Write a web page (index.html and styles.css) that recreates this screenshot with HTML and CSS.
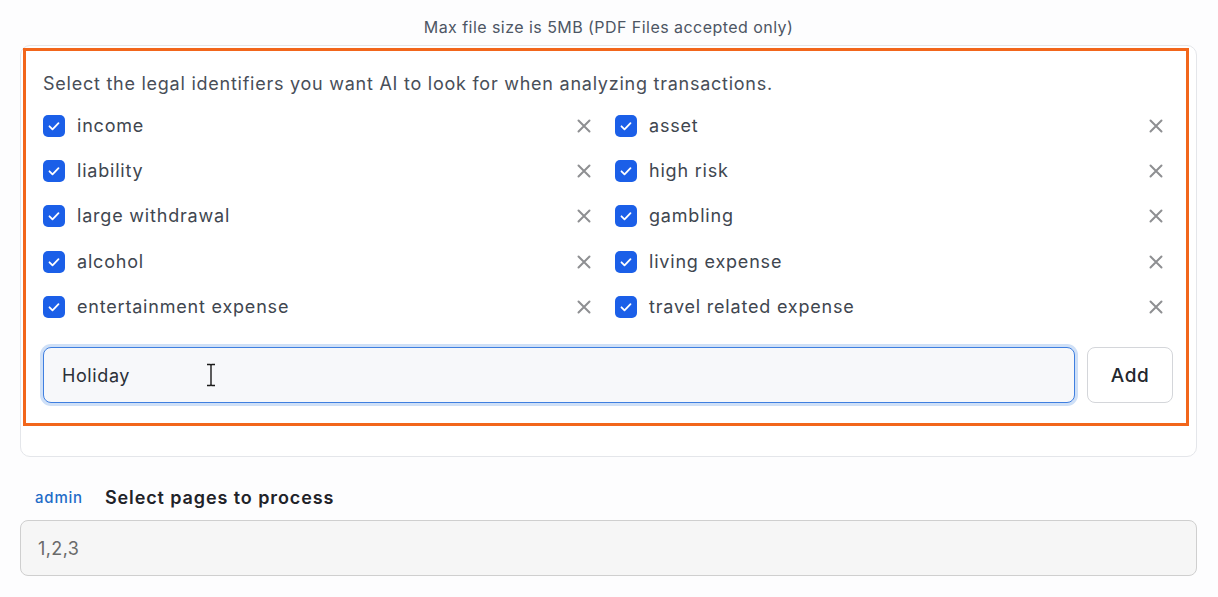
FILE: index.html
```html
<!DOCTYPE html>
<html lang="en">
<head>
<meta charset="utf-8">
<title>Legal identifiers</title>
<link rel="stylesheet" href="styles.css">
</head>
<body>
<div class="page">
  <p class="hint">Max file size is 5MB (PDF Files accepted only)</p>

  <section class="card">
    <div class="highlight">
      <p class="desc">Select the legal identifiers you want AI to look for when analyzing transactions.</p>
      <div class="grid">
        <div class="item"><span class="check"><svg viewBox="0 0 22 22"><path d="M6.5 11.3l3 3 6-6.2"/></svg></span><span class="label">income</span><span class="remove"><svg viewBox="0 0 16 16"><path d="M2.5 2.5l11 11M13.5 2.5l-11 11"/></svg></span></div>
        <div class="item"><span class="check"><svg viewBox="0 0 22 22"><path d="M6.5 11.3l3 3 6-6.2"/></svg></span><span class="label">asset</span><span class="remove"><svg viewBox="0 0 16 16"><path d="M2.5 2.5l11 11M13.5 2.5l-11 11"/></svg></span></div>
        <div class="item"><span class="check"><svg viewBox="0 0 22 22"><path d="M6.5 11.3l3 3 6-6.2"/></svg></span><span class="label">liability</span><span class="remove"><svg viewBox="0 0 16 16"><path d="M2.5 2.5l11 11M13.5 2.5l-11 11"/></svg></span></div>
        <div class="item"><span class="check"><svg viewBox="0 0 22 22"><path d="M6.5 11.3l3 3 6-6.2"/></svg></span><span class="label">high risk</span><span class="remove"><svg viewBox="0 0 16 16"><path d="M2.5 2.5l11 11M13.5 2.5l-11 11"/></svg></span></div>
        <div class="item"><span class="check"><svg viewBox="0 0 22 22"><path d="M6.5 11.3l3 3 6-6.2"/></svg></span><span class="label">large withdrawal</span><span class="remove"><svg viewBox="0 0 16 16"><path d="M2.5 2.5l11 11M13.5 2.5l-11 11"/></svg></span></div>
        <div class="item"><span class="check"><svg viewBox="0 0 22 22"><path d="M6.5 11.3l3 3 6-6.2"/></svg></span><span class="label">gambling</span><span class="remove"><svg viewBox="0 0 16 16"><path d="M2.5 2.5l11 11M13.5 2.5l-11 11"/></svg></span></div>
        <div class="item"><span class="check"><svg viewBox="0 0 22 22"><path d="M6.5 11.3l3 3 6-6.2"/></svg></span><span class="label">alcohol</span><span class="remove"><svg viewBox="0 0 16 16"><path d="M2.5 2.5l11 11M13.5 2.5l-11 11"/></svg></span></div>
        <div class="item"><span class="check"><svg viewBox="0 0 22 22"><path d="M6.5 11.3l3 3 6-6.2"/></svg></span><span class="label">living expense</span><span class="remove"><svg viewBox="0 0 16 16"><path d="M2.5 2.5l11 11M13.5 2.5l-11 11"/></svg></span></div>
        <div class="item"><span class="check"><svg viewBox="0 0 22 22"><path d="M6.5 11.3l3 3 6-6.2"/></svg></span><span class="label">entertainment expense</span><span class="remove"><svg viewBox="0 0 16 16"><path d="M2.5 2.5l11 11M13.5 2.5l-11 11"/></svg></span></div>
        <div class="item"><span class="check"><svg viewBox="0 0 22 22"><path d="M6.5 11.3l3 3 6-6.2"/></svg></span><span class="label">travel related expense</span><span class="remove"><svg viewBox="0 0 16 16"><path d="M2.5 2.5l11 11M13.5 2.5l-11 11"/></svg></span></div>
      </div>
      <div class="add-row">
        <div class="input-wrap">
          <div class="text-input">Holiday</div>
          <svg class="ibeam" viewBox="0 0 12 24"><path d="M2 1.5h3.2l.8.8.8-.8H10M6 2.3v19.4M2 22.5h3.2l.8-.8.8.8H10"/></svg>
        </div>
        <button class="add-btn">Add</button>
      </div>
    </div>
  </section>

  <div class="field-head">
    <span class="role">admin</span>
    <span class="field-title">Select pages to process</span>
  </div>
  <div class="pages-input">1,2,3</div>
</div>
</body>
</html>
```

FILE: styles.css
```css
* { box-sizing: border-box; }
html, body { margin: 0; padding: 0; }
body {
  background: #fdfdfe;
  font-family: Inter, "Noto Sans", "Liberation Sans", sans-serif;
  color: #3f4550;
}
.page {
  padding: 0 21px 0 20px;
}
.hint {
  margin: 17px 0 8px;
  text-align: center;
  font-size: 16px;
  line-height: 20px;
  letter-spacing: 0.45px;
  color: #4d5664;
}
.card {
  border: 1px solid #e4e6ea;
  border-radius: 10px;
  padding: 2px 7px 30px 2px;
  background: #fff;
}
.highlight {
  border: 3px solid #f2661b;
  padding: 21px 13px 20px 17px;
}
.desc {
  margin: 0 0 7px;
  font-size: 18px;
  line-height: 24px;
  letter-spacing: 0.75px;
  color: #484e58;
}
.grid {
  display: grid;
  grid-template-columns: 1fr 1fr;
  column-gap: 14px;
  grid-auto-rows: 45.3px;
}
.item {
  display: flex;
  align-items: center;
}
.check {
  width: 22px;
  height: 22px;
  border-radius: 5px;
  background: #1b5fe8;
  display: flex;
  flex: none;
}
.check svg {
  width: 22px;
  height: 22px;
  fill: none;
  stroke: #fff;
  stroke-width: 1.8;
  stroke-linecap: round;
  stroke-linejoin: round;
}
.label {
  margin-left: 12px;
  font-size: 18px;
  line-height: 24px;
  letter-spacing: 0.8px;
  color: #40464f;
  flex: 1;
}
.remove {
  width: 16px;
  height: 16px;
  margin-right: 9px;
  display: flex;
}
.remove svg {
  width: 16px;
  height: 16px;
  fill: none;
  stroke: #8e8f92;
  stroke-width: 2;
  stroke-linecap: round;
}
.add-row {
  display: flex;
  gap: 12px;
  margin-top: 18px;
  align-items: stretch;
}
.input-wrap {
  flex: 1;
  position: relative;
}
.text-input {
  height: 56px;
  border: 1.5px solid #3f7fe0;
  border-radius: 8px;
  box-shadow: 0 0 0 3px #cfe0f7;
  background: #f7f8fa;
  padding: 0 18px;
  display: flex;
  align-items: center;
  font-size: 18px;
  letter-spacing: 0.6px;
  color: #2b3038;
}
.ibeam {
  position: absolute;
  left: 162px;
  top: 16px;
  width: 12px;
  height: 24px;
  fill: none;
  stroke: #1a1a1a;
  stroke-width: 1.4;
}
.add-btn {
  width: 86px;
  height: 56px;
  border: 1px solid #d4d6da;
  border-radius: 8px;
  background: #fff;
  font-family: inherit;
  font-size: 19px;
  font-weight: 500;
  letter-spacing: 0.5px;
  color: #23272e;
  padding: 0;
}
.field-head {
  display: flex;
  align-items: center;
  margin: 28px 0 11px 15px;
  height: 24px;
}
.role {
  font-size: 15px;
  font-weight: 500;
  letter-spacing: 0.8px;
  color: #1f6cc8;
  margin-right: 22px;
}
.field-title {
  font-size: 18px;
  font-weight: 600;
  letter-spacing: 0.9px;
  color: #1f2329;
}
.pages-input {
  height: 56px;
  border: 1.5px solid #cfcfcf;
  border-radius: 8px;
  background: #f6f6f6;
  padding: 0 17px;
  display: flex;
  align-items: center;
  font-size: 18px;
  letter-spacing: 0.4px;
  color: #6a6a6a;
}
```
